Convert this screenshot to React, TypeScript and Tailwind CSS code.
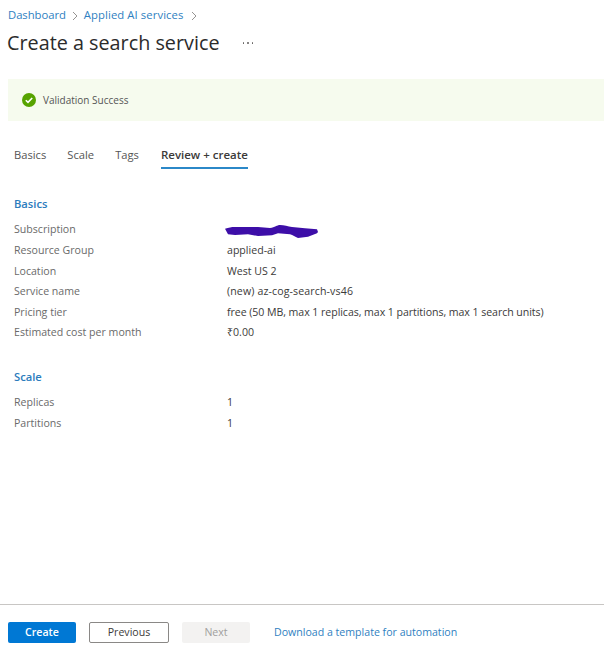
export default function App() {
  const font = { fontFamily: '"Open Sans", "Noto Sans", sans-serif' };
  const basics: [string, React.ReactNode][] = [
    ["Subscription", (
      <svg width="94" height="18" viewBox="0 0 94 18" className="-ml-[2px] block">
        <path d="M0 7.7 C4 6.5 6 6 10 6 L23 6 L33 6 L45 7 C50 6.5 52 4 55 4 C59 4 63 5.5 67 6 L80 7.3 L92 8.3 L93 11 L92 12.3 L83 15.7 L73 17 C70 16 68 14 65 13.3 L53 12.3 L47 14.3 L33 15 L23 13.3 L10 14 L3 13.3 Z" fill="#3d0ea8" />
      </svg>
    )],
    ["Resource Group", "applied-ai"],
    ["Location", "West US 2"],
    ["Service name", <span className="tracking-[0.12px]">(new) az-cog-search-vs46</span>],
    ["Pricing tier", <span className="tracking-[-0.06px]">free (50 MB, max 1 replicas, max 1 partitions, max 1 search units)</span>],
    ["Estimated cost per month", "₹0.00"],
  ];
  const scale: [string, React.ReactNode][] = [["Replicas", "1"], ["Partitions", "1"]];
  const Row = ({ label, value }: { label: string; value: React.ReactNode }) => (
    <div className="flex h-[20.6px] items-center text-[10.6px]">
      <div className="w-[213px] text-[#6a6a6a]">{label}</div>
      <div className="text-[#3b3a39] whitespace-nowrap">{value}</div>
    </div>
  );
  const Chevron = () => (
    <svg width="6" height="10" viewBox="0 0 6 10" fill="none" stroke="#8a8886" strokeWidth="0.9"><path d="M1 1l4 4-4 4" /></svg>
  );
  return (
    <div style={font} className="flex h-[646px] w-[604px] flex-col overflow-hidden bg-white">
      <div className="flex h-[30px] items-center pl-[8px] pt-[1px] text-[11.3px] text-[#2f7fc1]">
        <span className="tracking-[-0.05px]">Dashboard</span>
        <span className="ml-[6px] mr-[6px]"><Chevron /></span>
        <span className="tracking-[0.08px]">Applied AI services</span>
        <span className="ml-[8px]"><Chevron /></span>
      </div>
      <div className="flex h-[25px] items-center pl-[7px] text-[#2b2b2b]">
        <span className="text-[19.8px] leading-none font-medium">Create a search service</span>
        <span className="ml-[23px] flex items-center gap-[3px] pt-[1px]">
          <span className="h-[1.5px] w-[1.5px] rounded-full bg-[#605e5c]" />
          <span className="h-[1.5px] w-[1.5px] rounded-full bg-[#605e5c]" />
          <span className="h-[1.5px] w-[1.5px] rounded-full bg-[#605e5c]" />
        </span>
      </div>
      <div className="ml-[8px] mt-[24px] flex h-[42px] items-center gap-[7px] bg-[#f6fbee] pl-[14px] text-[10px] text-[#555]">
        <svg width="14" height="14" viewBox="0 0 14 14">
          <circle cx="7" cy="7" r="7" fill="#57a300" />
          <path d="M3.8 7.2l2.2 2.2 4.2-4.4" fill="none" stroke="#fff" strokeWidth="1.6" />
        </svg>
        <span>Validation Success</span>
      </div>
      <div className="mt-[22px] flex h-[26px] pl-[14px] text-[11.2px] text-[#555]">
        <span className="pt-[4px]">Basics</span>
        <span className="ml-[21px] pt-[4px]">Scale</span>
        <span className="ml-[21px] pt-[4px]">Tags</span>
        <span className="ml-[22px] border-b-2 border-[#2b88c8] pt-[3px] text-[11.5px] font-semibold text-[#3b3a39]">Review + create</span>
      </div>
      <div className="mt-[26px] pl-[14px]">
        <div className="mb-[7px] flex h-[18px] items-center text-[11.2px] font-semibold text-[#2b7cbd]">Basics</div>
        {basics.map(([l, v]) => <Row key={l} label={l} value={v} />)}
        <div className="mb-[6px] mt-[25px] flex h-[18px] items-center text-[11.2px] font-semibold text-[#2b7cbd]">Scale</div>
        {scale.map(([l, v]) => <Row key={l} label={l} value={v} />)}
      </div>
      <div className="mt-auto flex h-[42px] items-start border-t border-[#c8c6c4] pl-[8px] pt-[17px] text-[10.6px]">
        <button className="h-[21px] w-[68px] rounded-[2px] bg-[#0078d4] font-semibold text-white">Create</button>
        <button className="ml-[13px] h-[21px] w-[80px] rounded-[2px] border border-[#8a8886] bg-white font-medium text-[#3b3a39]">Previous</button>
        <button className="ml-[13px] h-[21px] w-[68px] rounded-[2px] bg-[#f3f2f1] font-medium text-[#a19f9d]">Next</button>
        <span className="ml-[24px] flex h-[21px] items-center text-[#2f7fc1]">Download a template for automation</span>
      </div>
    </div>
  );
}
